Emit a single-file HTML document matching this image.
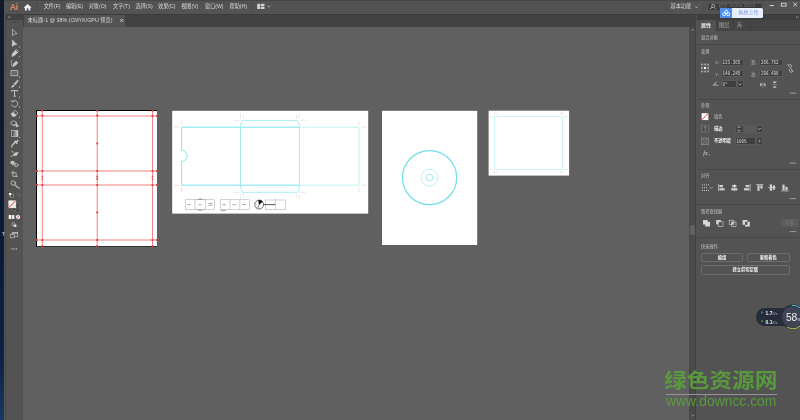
<!DOCTYPE html>
<html lang="zh-CN">
<head>
<meta charset="utf-8">
<title>Adobe Illustrator</title>
<style>
html,body{margin:0;padding:0;}
body{width:800px;height:420px;position:relative;overflow:hidden;background:#606060;
  font-family:"Liberation Sans","Noto Sans CJK SC",sans-serif;color:#d6d6d6;}
.abs{position:absolute;}
.t{position:absolute;white-space:nowrap;line-height:1;font-size:5.15px;color:#d8d8d8;}
.lbl{position:absolute;white-space:nowrap;line-height:1;font-size:4.25px;color:#c2c2c2;}
.sep{position:absolute;left:697px;width:103px;height:1px;background:#474747;}
.inp{position:absolute;background:#3f3f3f;border:0.5px solid #5a5a5a;box-sizing:border-box;border-radius:1px;}
.num{position:absolute;white-space:nowrap;line-height:1;font-size:4.2px;color:#dcdcdc;font-family:"Liberation Mono","Liberation Sans",monospace;transform:scaleY(1.22);transform-origin:0 0;}
.btn{position:absolute;box-sizing:border-box;border:0.6px solid #6c6c6c;border-radius:1.5px;height:9.3px;}
.dots{position:absolute;font-size:6px;line-height:1;color:#c8c8c8;letter-spacing:0.3px;font-weight:bold;}
</style>
</head>
<body>
<div id="root" style="position:absolute;left:0;top:0;width:800px;height:420px;will-change:transform;transform:translateZ(0);">
<!-- desktop strip -->
<div class="abs" style="left:0;top:0;width:4.2px;height:420px;background:linear-gradient(#10182a 0%,#0c1a38 60%,#0d2144 85%,#1a3864 100%);"></div>

<!-- menu bar -->
<div class="abs" id="menubar" style="left:4.2px;top:0;width:795.8px;height:13.5px;background:#535353;border-top:1px solid #464646;box-sizing:border-box;"></div>
<div class="abs" style="left:4.2px;top:13.5px;width:795.8px;height:1px;background:#3c3c3c;"></div>

<!-- tab bar -->
<div class="abs" style="left:23px;top:14.5px;width:673.5px;height:12px;background:#424242;"></div>
<div class="abs" style="left:23.5px;top:14.5px;width:101.5px;height:12px;background:#535353;"></div>

<!-- toolbar -->
<div class="abs" style="left:4.2px;top:14px;width:19.3px;height:406px;background:#3f3f3f;"></div><div class="abs" style="left:4.2px;top:14px;width:0.9px;height:406px;background:#565656;"></div><div class="abs" style="left:5.1px;top:14px;width:1.2px;height:406px;background:#474747;"></div>
<div class="abs" style="left:6px;top:14.5px;width:16.5px;height:5px;background:#414141;"></div>
<div class="abs" id="toolbar" style="left:6px;top:19.5px;width:16.5px;height:401px;background:#535353;"></div>

<!-- canvas -->
<div class="abs" id="canvas" style="left:23.5px;top:26.5px;width:666px;height:394px;background:#606060;"></div>

<!-- canvas scrollbar -->
<div class="abs" style="left:689.2px;top:26.5px;width:7.4px;height:394px;background:#4a4a4a;"></div>
<div class="abs" style="left:690px;top:224.5px;width:5.5px;height:10.5px;border-radius:2.5px;background:#626262;"></div>

<!-- right panel -->
<div class="abs" style="left:695.2px;top:14.5px;width:104.8px;height:406px;background:#535353;border-left:1.8px solid #414141;box-sizing:border-box;"></div>
<div class="abs" style="left:697px;top:14.5px;width:103px;height:5px;background:#3f3f3f;"></div>
<div class="abs" style="left:697px;top:19.5px;width:103px;height:11.5px;background:#454545;"></div>
<div class="abs" style="left:697px;top:19.5px;width:19px;height:11.5px;background:#535353;"></div>

<!--ICONS-->
<svg class="abs" style="left:0;top:0" width="30" height="420" viewBox="0 0 30 420">
<path d="M2.2 232.6H4.2L3.3 235.6" stroke="#c4d0e6" stroke-width="0.8" fill="none"/>
<!-- header chevrons + grip -->
<path d="M8 16.2L9 17.1L8 18M9.6 16.2L10.6 17.1L9.6 18" stroke="#bbb" stroke-width="0.5" fill="none"/>
<path d="M10.5 22.3H18.5" stroke="#3e3e3e" stroke-width="1" stroke-dasharray="0.7 0.5"/>
<g fill="none" stroke="#cdcdcd" stroke-width="0.8" stroke-linejoin="round" stroke-linecap="round">
<!-- selection -->
<path d="M12.4 29.6V35.8L13.9 34.3L16.6 33.8Z" stroke-width="0.7"/>
<!-- direct selection -->
<path d="M12.4 40.2V46.6L14 45L16.6 44.5Z" fill="#cdcdcd" stroke-width="0.6"/>
<!-- pen -->
<path d="M12 56L12.6 53.4L15.6 50.6L17.4 52.4L14.6 55.4Z" fill="#cdcdcd"/>
<path d="M15.2 50.3L16.6 49.6L18.2 51.2L17.6 52.6" stroke-width="0.7"/>
<!-- curvature -->
<path d="M13 66L13.5 63.8L16.2 61.2L17.8 62.8L15.2 65.5Z" fill="#cdcdcd"/>
<path d="M12.4 66.3C10 65.5 12.6 63.6 11.2 62.4C10.4 61.6 11 60.4 12.2 60.6" stroke-width="0.7"/>
<!-- rectangle -->
<rect x="11.3" y="70.5" width="6.5" height="5.2" fill="#6a6a6a" stroke-width="0.7"/>
<!-- brush -->
<path d="M17.7 80L18.5 80.8L15.2 85.2L13.9 84Z" fill="#cdcdcd" stroke-width="0.3"/>
<path d="M11.8 87.2C12 85.4 12.8 84.6 13.8 85C14.8 86.2 13.8 87.2 11.8 87.2Z" fill="#cdcdcd" stroke-width="0.4"/>
<!-- type -->
<path d="M11.6 91.8V90.6H17.6V91.8M14.6 90.6V96.2M13.4 96.2H15.8" stroke-width="0.9" stroke-linecap="butt" stroke-linejoin="miter"/>
<!-- rotate -->
<path d="M12.2 101.6A3.2 3.2 0 1 1 11.6 104.9" stroke-width="0.8"/>
<path d="M11.2 100.3L12.2 102.2L14 101.2" stroke-width="0.6"/>
<!-- eraser -->
<path d="M11.4 114L15.2 110.4L18 113L15 116.2H12.8Z" stroke-width="0.7"/>
<path d="M13.2 112.2L16.2 115L15 116.2H12.8L11.4 114Z" fill="#cdcdcd" stroke-width="0.4"/>
<!-- shape builder -->
<ellipse cx="13.6" cy="123" rx="2.8" ry="2" stroke-width="0.7"/>
<path d="M13 125.2C14.6 126.2 16 125.4 16.4 124.4" stroke-width="0.7"/>
<path d="M16.2 123.6V127.4L17.2 126.4L18.8 126.2Z" fill="#cdcdcd" stroke-width="0.4"/>
<!-- eyedropper -->
<path d="M11.8 146.8L12.2 145.2L15.4 142" stroke-width="1.2"/>
<path d="M15 141.2L17 143.2M16 142.2L17.8 140.6" stroke-width="1.5"/>
<!-- symbol sprayer / blend -->
<path d="M10.8 156.4C12.4 156 13.6 154.8 14.6 153.4C15.2 152.4 16.2 152.2 17 152.6L18.4 152.2L17.6 153.6C17.4 155.4 15.6 156.2 13.8 155.6Z" fill="#cdcdcd" stroke-width="0.4"/>
<path d="M11.6 151.4L13.6 153.4M12.4 151L13.2 152" stroke-width="0.6"/>
<!-- blend -->
<rect x="10.8" y="161.2" width="3.4" height="2.6" fill="#cdcdcd" stroke-width="0.3"/>
<path d="M12.6 163.2H15.6V165H12.6Z" stroke-width="0.6"/>
<ellipse cx="16.2" cy="165.2" rx="1.9" ry="1.6" stroke-width="0.7"/>
<!-- artboard -->
<path d="M13 170.6V176.4H17.8M11 172.8H16.2V176.4" stroke-width="0.75" stroke-linecap="butt"/>
<!-- zoom -->
<circle cx="13.2" cy="183" r="2.2" stroke-width="0.8"/>
<path d="M15 184.8L18.2 187.8" stroke-width="1.1"/>
</g>
<!-- gradient tool -->
<defs><linearGradient id="gr" x1="0" x2="1"><stop offset="0" stop-color="#3a3a3a"/><stop offset="1" stop-color="#d6d6d6"/></linearGradient>
<linearGradient id="wf" x1="0" y1="0" x2="1" y2="1"><stop offset="0" stop-color="#ffffff"/><stop offset="1" stop-color="#dcdcdc"/></linearGradient></defs>
<rect x="11.5" y="130.6" width="6.4" height="6" fill="url(#gr)" stroke="#cdcdcd" stroke-width="0.6"/>
<!-- little corner dots -->
<g fill="#dcdcdc">
<path d="M20 45.9V47.3H18.6ZM20 55.9V57.3H18.6ZM20 76V77.4H18.6ZM20 86V87.4H18.6ZM20 96.2V97.6H18.6ZM20 106.2V107.6H18.6ZM20 116.2V117.6H18.6ZM20 136.4V137.8H18.6ZM20 187.2V188.6H18.6Z"/>
</g>
<!-- default fill/stroke mini -->
<rect x="10.4" y="194.2" width="2.8" height="2.8" fill="#111" stroke="#e6e6e6" stroke-width="0.5"/>
<rect x="8.7" y="192.7" width="2.9" height="2.9" fill="#fff" stroke="#222" stroke-width="0.4"/>
<path d="M17.2 193.6C18.8 193.4 19.8 194.4 19.8 196.4M17.2 193.6L18 192.9M17.2 193.6L18 194.4M19.8 196.4L19.1 195.6M19.8 196.4L20.5 195.6" stroke="#7e7e7e" stroke-width="0.5" fill="none"/>
<!-- stroke (behind) -->
<rect x="12.8" y="203.8" width="7.4" height="7.8" fill="#3c3c3c" stroke="#6e6e6e" stroke-width="0.5"/>
<rect x="14.4" y="205.6" width="4" height="4.2" fill="#535353"/>
<path d="M19.3 204.6V211" stroke="#8fa6c8" stroke-width="0.6" stroke-dasharray="1.4 0.7"/>
<path d="M14.2 210.4L15.4 209.6V211.2Z" fill="#aaa"/>
<!-- fill -->
<rect x="8.1" y="200.1" width="8.2" height="8.2" fill="url(#wf)" stroke="#2e2e2e" stroke-width="0.4"/>
<path d="M8.4 208L16 200.4" stroke="#e0262c" stroke-width="0.9"/>
<!-- color / gradient / none -->
<rect x="8.7" y="215" width="2.6" height="4" fill="#f4f4f4"/>
<rect x="11.8" y="215" width="2.6" height="4" fill="#e4e4e4"/>
<circle cx="18" cy="217" r="2" fill="#fff" stroke="#d8d8d8" stroke-width="0.3"/>
<path d="M16.7 218.4L19.3 215.6" stroke="#e0262c" stroke-width="0.8"/>
<!-- draw mode -->
<circle cx="13.4" cy="224.2" r="1.7" fill="none" stroke="#c8c8c8" stroke-width="0.6"/>
<rect x="13.6" y="224.4" width="2.8" height="2.6" fill="#d2d2d2"/>
<!-- screen mode -->
<rect x="12.2" y="232.4" width="5.6" height="4.2" fill="none" stroke="#cdcdcd" stroke-width="0.6"/>
<path d="M12.2 233.2H17.8" stroke="#cdcdcd" stroke-width="0.9"/>
<rect x="10.2" y="234.4" width="4" height="3.4" fill="#535353" stroke="#cdcdcd" stroke-width="0.6"/>
<!-- more -->
<g fill="#c6c6c6"><rect x="11.4" y="248.3" width="1.2" height="1.2"/><rect x="13.6" y="248.3" width="1.2" height="1.2"/><rect x="15.8" y="248.3" width="1.2" height="1.2"/></g>
</svg>
<!--/ICONS-->
<!--TEXT-->
<!-- Ai logo + home -->
<div class="abs" style="left:9.7px;top:1.5px;font-size:8.8px;line-height:10px;color:#d98a60;font-weight:bold;letter-spacing:-0.3px;">Ai</div>
<svg class="abs" style="left:0;top:0" width="800" height="32" viewBox="0 0 800 32">
<path d="M23.8 7.4L27.6 3.9L31.4 7.4L30.8 8L30.3 7.6V10.4H28.4V8.2H26.8V10.4H24.9V7.6L24.4 8Z" fill="#f0f0f0"/>
<path d="M37.2 3V11.4M252.6 3V11.4M665.6 3V11.4M703.8 3V11.4" stroke="#474747" stroke-width="0.7"/>
<!-- workspace switcher -->
<rect x="257.2" y="3.8" width="3" height="5.2" fill="#d2d2d2"/><rect x="260.9" y="3.8" width="3.6" height="2.3" fill="#d2d2d2"/><rect x="260.9" y="6.7" width="3.6" height="2.3" fill="#d2d2d2"/>
<path d="M267.6 5.8L269 7.2L270.4 5.8" stroke="#d2d2d2" stroke-width="0.7" fill="none"/>
<path d="M695.2 6.4L696.6 7.8L698 6.4" stroke="#d2d2d2" stroke-width="0.7" fill="none"/>
<!-- tab close -->
<path d="M120.4 19.2L123 21.8M123 19.2L120.4 21.8" stroke="#eee" stroke-width="0.8"/>
<!-- search box -->
<rect x="708" y="3.4" width="54" height="7.2" rx="0.8" fill="#3b3b3b" stroke="#5e5e5e" stroke-width="0.5"/>
<circle cx="713.2" cy="6" r="1.6" fill="none" stroke="#e4e4e4" stroke-width="0.6"/>
<path d="M712 7.2L710.2 9" stroke="#e4e4e4" stroke-width="0.8"/>
<path d="M714.6 8.4H716.2L715.4 9.2Z" fill="#e4e4e4"/>
<!-- window controls -->
<path d="M766.6 0.5V8.4H800M778 0.5V8.4M789.5 0.5V8.4" stroke="#5e5e5e" stroke-width="0.5" fill="none"/>
<path d="M769.6 5.6H774" stroke="#e6e6e6" stroke-width="0.9"/>
<rect x="781.3" y="3.2" width="4.8" height="2.9" fill="none" stroke="#e6e6e6" stroke-width="0.8"/>
<path d="M793.2 2.6L797.2 6.4M797.2 2.6L793.2 6.4" stroke="#e6e6e6" stroke-width="0.8"/>
<!-- panel collapse chevrons -->
<path d="M796 16.2L797 17.1L796 18M797.6 16.2L798.6 17.1L797.6 18" stroke="#bbb" stroke-width="0.5" fill="none"/>
<!-- panel tab separators -->
<path d="M716.4 19.5V31M733.4 19.5V31M750.2 19.5V31" stroke="#3a3a3a" stroke-width="0.6"/>
<!-- scrollbar arrows -->
<path d="M691.4 30.6L692.8 29.2L694.2 30.6" stroke="#bdbdbd" stroke-width="0.6" fill="none"/>
</svg>
<svg class="abs" style="left:688px;top:408px" width="10" height="12" viewBox="688 408 10 12"><path d="M691.4 414.8L692.8 416.2L694.2 414.8" stroke="#bdbdbd" stroke-width="0.6" fill="none"/></svg>
<div class="t" style="left:43.7px;top:4.1px;">文件(F)</div>
<div class="t" style="left:65.9px;top:4.1px;">编辑(E)</div>
<div class="t" style="left:88.7px;top:4.1px;">对象(O)</div>
<div class="t" style="left:113.1px;top:4.1px;">文字(T)</div>
<div class="t" style="left:135.6px;top:4.1px;">选择(S)</div>
<div class="t" style="left:158.1px;top:4.1px;">效果(C)</div>
<div class="t" style="left:181.2px;top:4.1px;">视图(V)</div>
<div class="t" style="left:205px;top:4.1px;">窗口(W)</div>
<div class="t" style="left:229.5px;top:4.1px;">帮助(H)</div>
<div class="t" style="left:27.5px;top:18.1px;font-size:5.32px;">未标题-1 @ 38% (CMYK/GPU 预览)</div>
<div class="t" style="left:670.6px;top:4px;">基本功能</div>
<div class="t" style="left:718.5px;top:4.4px;color:#6c6c6c;font-size:4.6px;">搜索 Adobe Stock</div>
<!-- panel tabs -->
<div class="t" style="left:701px;top:22.9px;color:#f2f2f2;font-weight:bold;font-size:5px;">属性</div>
<div class="t" style="left:719px;top:22.8px;color:#a9a9a9;">图层</div>
<div class="t" style="left:737.2px;top:22.8px;color:#a9a9a9;">库</div>
<!--/TEXT-->
<!--ART-->
<svg class="abs" style="left:0;top:0" width="800" height="420" viewBox="0 0 800 420">
<!-- artboard 1 -->
<rect x="36" y="110" width="121" height="137" fill="#000"/>
<rect x="37" y="111" width="120" height="135.2" fill="#fff"/>
<g stroke="#ee5c5c" stroke-width="0.75" fill="none">
<line x1="42.3" y1="110" x2="42.3" y2="247"/>
<line x1="97.2" y1="110" x2="97.2" y2="247"/>
<line x1="152.5" y1="110" x2="152.5" y2="247"/>
<line x1="36" y1="116" x2="157" y2="116"/>
<line x1="36" y1="171" x2="157" y2="171"/>
<line x1="36" y1="185" x2="157" y2="185"/>
<line x1="36" y1="240" x2="157" y2="240"/>
</g>
<g fill="#e8363a">
<circle cx="42.3" cy="115.5" r="1.1"/><circle cx="37" cy="116" r="0.9"/><circle cx="42.3" cy="110.5" r="0.9"/>
<circle cx="97.2" cy="110.8" r="1"/><circle cx="97.2" cy="115.6" r="1.1"/>
<circle cx="152.5" cy="110.8" r="1"/><circle cx="152.5" cy="115.8" r="1.1"/><circle cx="156.8" cy="116" r="0.9"/>
<circle cx="97.2" cy="143.5" r="1"/><circle cx="97.2" cy="212.5" r="1"/>
<circle cx="42.3" cy="171" r="1.1"/><circle cx="37" cy="171" r="0.9"/><circle cx="42.3" cy="185" r="1.1"/><circle cx="37" cy="185" r="0.9"/>
<circle cx="42.3" cy="176.5" r="0.8"/><circle cx="42.3" cy="179" r="0.8"/>
<circle cx="97.2" cy="171" r="1.1"/><circle cx="97.2" cy="185" r="1.1"/><circle cx="97.2" cy="176.5" r="0.9"/><circle cx="97.2" cy="179" r="0.9"/>
<circle cx="152.5" cy="171" r="1.1"/><circle cx="156.8" cy="171" r="0.9"/><circle cx="152.5" cy="185" r="1.1"/><circle cx="156.8" cy="185" r="0.9"/>
<circle cx="152.5" cy="176.5" r="0.8"/><circle cx="152.5" cy="179" r="0.8"/>
<circle cx="42.3" cy="240" r="1.1"/><circle cx="37" cy="240" r="0.9"/><circle cx="42.3" cy="246" r="0.9"/>
<circle cx="97.2" cy="240" r="1.1"/><circle cx="97.2" cy="246" r="1"/>
<circle cx="152.5" cy="240" r="1.1"/><circle cx="156.8" cy="240" r="0.9"/><circle cx="152.5" cy="246" r="0.9"/>
</g>

<!-- artboard 2 -->
<rect x="172.2" y="110.8" width="196" height="102.8" fill="#fff"/>
<g stroke="#cfcfcf" stroke-width="0.5" fill="none">
<path d="M181.6 120.5V125.5M174.3 127.2H179.5M181.6 187V192M174.3 185.2H179.5"/>
<path d="M359 120.5V125.5M361 127.2H366M359 187V192M361 185.2H366"/>
<path d="M240.5 113.5V118.3M243.3 115V118.3M234.5 120.3H239.5M299.4 113.5V118.3M296.6 115V118.3M300.8 120.3H305.5"/>
<path d="M240.5 194.5V199M243.3 194.5V197.5M234.5 192.4H239.5M299.4 194.5V199M296.6 194.5V197.5M300.8 192.4H305.5"/>
</g>
<g fill="none">
<path d="M181.6 127.2H299.4M181.6 185.2H299.4" stroke="#6adfe9" stroke-width="0.9"/>
<path d="M181.6 127.2V150.2A5.6 5.6 0 0 1 181.6 161.4V185.2" stroke="#74e0ea" stroke-width="0.8"/>
<path d="M240.5 127.2V185.2M299.4 127.2V185.2" stroke="#8ee6ee" stroke-width="0.8"/>
<path d="M240.5 127.2C240.7 124 241.2 121.6 242.3 120.4H297.6C298.7 121.6 299.2 124 299.4 127.2M240.5 185.2C240.7 188.4 241.2 191 242.3 192.3H297.6C298.7 191 299.2 188.4 299.4 185.2" stroke="#8be5ee" stroke-width="0.7"/>
<path d="M299.4 127.2H359V185.2H299.4" stroke="#aeedf2" stroke-width="0.7"/>
</g>
<!-- small diagrams -->
<g stroke="#9a9a9a" stroke-width="0.45" fill="none">
<rect x="185.3" y="199.8" width="29.4" height="9.6"/>
<path d="M195.3 199.8Q193.8 204.6 195.3 209.4M205.3 199.8Q206.8 204.6 205.3 209.4M195.3 199.8Q200 198 205.3 199.8M195.3 209.4Q200 211.2 205.3 209.4"/>
<rect x="220.2" y="199.8" width="29.3" height="9.6"/>
<path d="M230 199.8V209.4M239.8 199.8V209.4"/>
<rect x="265.4" y="200" width="20" height="9.3"/>
<path d="M275.3 198.5V209.3"/>
</g>
<g stroke="#555" stroke-width="0.5">
<path d="M187.5 204.6H190.5M198.5 204.6H201.5M208.5 203.4H212.5M208.5 205.3H212.5M198.5 199.3H202M198.5 210H202M222.5 204.6H226M232.5 204.6H236M242.5 204.6H246M220.5 210.6H226"/>
</g>
<circle cx="259.2" cy="204.6" r="4.4" fill="#fff" stroke="#111" stroke-width="0.6"/>
<path d="M259.2 204.6L262.5 201.6A4.4 4.4 0 0 0 258.5 200.3ZM259.2 204.6L257.8 208.2" fill="#111" stroke="#111" stroke-width="0.5"/>
<path d="M263.6 204.6H275.3" stroke="#111" stroke-width="0.7"/>

<!-- artboard 3 -->
<rect x="382" y="110.8" width="95.2" height="134.2" fill="#fff"/>
<circle cx="429.6" cy="177.6" r="27.1" fill="none" stroke="#6fdfe9" stroke-width="1.25"/>
<circle cx="429.6" cy="177.6" r="8.5" fill="none" stroke="#a2e9f0" stroke-width="0.7"/>
<circle cx="429.6" cy="177.6" r="3.3" fill="none" stroke="#88e4ec" stroke-width="0.8"/>

<!-- artboard 4 -->
<rect x="488.6" y="110.7" width="80.5" height="64.9" fill="#fff"/>
<g stroke="#cfcfcf" stroke-width="0.5" fill="none">
<path d="M494.4 112.5V115M496.2 112.5V115M560.8 112.5V115M562.6 112.5V115M494.4 171V173.5M496.2 171V173.5M560.8 171V173.5M562.6 171V173.5"/>
<path d="M490 116.4H493M564 116.4H567.5M490 169.4H493M564 169.4H567.5"/>
</g>
<rect x="494.4" y="116.4" width="68.2" height="53" fill="none" stroke="#aeecf1" stroke-width="0.6"/>
</svg>
<!--/ART-->
<!--PANEL-->
<div class="lbl" style="left:701px;top:36.4px;">混合对象</div>
<div class="sep" style="top:44.4px;"></div>
<div class="lbl" style="left:701px;top:50.4px;">变换</div>
<div class="sep" style="top:99px;"></div>
<div class="lbl" style="left:701px;top:104.2px;">外观</div>
<div class="sep" style="top:168.6px;"></div>
<div class="lbl" style="left:701px;top:174.4px;">对齐</div>
<div class="sep" style="top:204.2px;"></div>
<div class="lbl" style="left:701px;top:209.6px;">路径查找器</div>
<div class="sep" style="top:236.8px;"></div>
<div class="lbl" style="left:701px;top:245.2px;">快速操作</div>

<!-- transform inputs -->
<div class="inp" style="left:721px;top:58.5px;width:22.6px;height:7.2px;"></div>
<div class="inp" style="left:721px;top:70px;width:22.6px;height:7.2px;"></div>
<div class="inp" style="left:759.4px;top:58.5px;width:23.6px;height:7.2px;"></div>
<div class="inp" style="left:759.4px;top:70px;width:23.6px;height:7.2px;"></div>
<div class="inp" style="left:721px;top:80.4px;width:15.8px;height:7.6px;"></div>
<div class="inp" style="left:736.6px;top:80.4px;width:7px;height:7.6px;"></div>
<div class="lbl" style="left:715px;top:61.4px;font-size:4.4px;color:#b8b8b8;">X:</div>
<div class="lbl" style="left:715px;top:72.9px;font-size:4.4px;color:#b8b8b8;">Y:</div>
<div class="lbl" style="left:751px;top:61.2px;font-size:4.4px;color:#b8b8b8;">宽:</div>
<div class="lbl" style="left:751px;top:72.8px;font-size:4.4px;color:#b8b8b8;">高:</div>
<div class="num" style="left:722.6px;top:59.8px;">133.365</div>
<div class="num" style="left:722.6px;top:71.3px;">148.245</div>
<div class="num" style="left:761px;top:59.8px;">266.762</div>
<div class="num" style="left:761px;top:71.3px;">298.496</div>
<div class="num" style="left:722.6px;top:81.8px;">0°</div>

<!-- appearance -->
<div class="lbl" style="left:714px;top:115px;">填色</div>
<div class="lbl" style="left:714px;top:126.8px;color:#f4f4f4;font-weight:bold;">描边</div>
<div class="lbl" style="left:714px;top:139.4px;color:#f4f4f4;font-weight:bold;">不透明度</div>
<div class="inp" style="left:735.2px;top:125px;width:8.2px;height:7.6px;border-right:none;"></div>
<div class="inp" style="left:743.2px;top:125px;width:12.6px;height:7.6px;background:#595959;border-left:none;border-right:none;border-radius:0;"></div>
<div class="inp" style="left:755.6px;top:125px;width:7.3px;height:7.6px;"></div>
<div class="inp" style="left:735.2px;top:137.2px;width:20.6px;height:7.6px;"></div>
<div class="inp" style="left:755.9px;top:137.2px;width:7px;height:7.6px;"></div>
<div class="num" style="left:736.4px;top:139px;">100%</div>

<!-- pathfinder expand button (disabled) -->
<div class="abs" style="left:781px;top:219px;width:17.4px;height:8.4px;background:#5d5d5d;border-radius:1px;"></div>
<div class="lbl" style="left:785.6px;top:221px;color:#7a7a7a;">扩展</div>

<!-- quick actions -->
<div class="btn" style="left:701px;top:252.5px;width:42.2px;"></div>
<div class="btn" style="left:747.2px;top:252.5px;width:42.4px;"></div>
<div class="btn" style="left:701px;top:265.4px;width:88.6px;"></div>
<div class="lbl" style="left:717.8px;top:255.5px;color:#f4f4f4;font-weight:bold;">编组</div>
<div class="lbl" style="left:759.8px;top:255.5px;color:#f4f4f4;font-weight:bold;">重新着色</div>
<div class="lbl" style="left:732.6px;top:268.3px;color:#f4f4f4;font-weight:bold;">建立剪切蒙版</div>

<svg class="abs" style="left:696px;top:30px" width="104" height="260" viewBox="696 30 104 260">
<!-- reference point icon -->
<g fill="#a6a6a6">
<rect x="701" y="63.6" width="1.8" height="1.8"/><rect x="704.1" y="63.6" width="1.8" height="1.8"/><rect x="707.2" y="63.6" width="1.8" height="1.8"/>
<rect x="701" y="67.1" width="1.8" height="1.8"/><rect x="707.2" y="67.1" width="1.8" height="1.8"/>
<rect x="701" y="70.6" width="1.8" height="1.8"/><rect x="704.1" y="70.6" width="1.8" height="1.8"/><rect x="707.2" y="70.6" width="1.8" height="1.8"/>
</g>
<rect x="701.9" y="64.5" width="6.2" height="7" fill="none" stroke="#9a9a9a" stroke-width="0.4"/>
<rect x="703.9" y="66.9" width="2.2" height="2.2" fill="#fff"/>
<!-- link icon -->
<g stroke="#cfcfcf" stroke-width="0.7" fill="none">
<path d="M788.4 64.8C789.8 63.8 791.6 64.4 791.4 66L791 67.4M791.6 70.4C793 71.4 792.4 72.6 790.8 72.2C789.4 71.8 789.2 70.2 789.6 69.2M787.6 64.4L793.2 71.6"/>
</g>
<!-- angle icon -->
<path d="M713 85.2H718.6M713 85.2L717 81.2M715.8 85.2A2.8 2.8 0 0 0 715 83.2" stroke="#cfcfcf" stroke-width="0.6" fill="none"/>
<path d="M738.8 83.6L740.2 85L741.6 83.6" stroke="#e0e0e0" stroke-width="0.7" fill="none"/>
<!-- flip icons -->
<path d="M760.2 82.6L762.2 84.7L760.2 86.8ZM765.4 82.6L763.4 84.7L765.4 86.8Z" fill="#c4c4c4"/>
<path d="M762.8 82V87.4" stroke="#c4c4c4" stroke-width="0.4"/>
<path d="M772.6 81.6L774.7 83.7L776.8 81.6ZM772.6 87.8L774.7 85.7L776.8 87.8Z" fill="#c4c4c4"/>
<path d="M772 84.7H777.4" stroke="#c4c4c4" stroke-width="0.4"/>
<!-- more dots -->
<g fill="#cfcfcf">
<rect x="790.2" y="92.6" width="1.1" height="1.1"/><rect x="792.4" y="92.6" width="1.1" height="1.1"/><rect x="794.6" y="92.6" width="1.1" height="1.1"/>
<rect x="790.2" y="162.6" width="1.1" height="1.1"/><rect x="792.4" y="162.6" width="1.1" height="1.1"/><rect x="794.6" y="162.6" width="1.1" height="1.1"/>
<rect x="790.2" y="198" width="1.1" height="1.1"/><rect x="792.4" y="198" width="1.1" height="1.1"/><rect x="794.6" y="198" width="1.1" height="1.1"/>
<rect x="790.2" y="231" width="1.1" height="1.1"/><rect x="792.4" y="231" width="1.1" height="1.1"/><rect x="794.6" y="231" width="1.1" height="1.1"/>
</g>
<!-- fill swatch -->
<rect x="701.4" y="113" width="7.2" height="7.2" fill="#fff" stroke="#3a3a3a" stroke-width="0.3"/>
<path d="M701.6 120L708.4 113.2" stroke="#e0262c" stroke-width="0.9"/>
<!-- stroke swatch -->
<rect x="701.6" y="125.2" width="6.8" height="6.8" fill="#4c4c4c" stroke="#8c8c8c" stroke-width="0.5"/>
<path d="M704 127.6C704.2 126.4 706 126.4 706 127.6C706 128.6 705 128.6 705 129.6M705 130.4V131" stroke="#c4c4c4" stroke-width="0.6" fill="none"/>
<!-- opacity swatch -->
<rect x="701.6" y="138" width="6.8" height="6.8" fill="#585858" stroke="#a8a8a8" stroke-width="0.5"/>
<g fill="#7a7a7a"><rect x="702.6" y="139" width="1.6" height="1.6"/><rect x="705.8" y="139" width="1.6" height="1.6"/><rect x="704.2" y="140.6" width="1.6" height="1.6"/><rect x="702.6" y="142.2" width="1.6" height="1.6"/><rect x="705.8" y="142.2" width="1.6" height="1.6"/></g>
<!-- spinner arrows, dropdowns -->
<path d="M737.4 128L739 126.4L740.6 128M737.4 129.8L739 131.4L740.6 129.8" stroke="#e0e0e0" stroke-width="0.7" fill="none"/>
<path d="M758 128.2L759.4 129.6L760.8 128.2" stroke="#e0e0e0" stroke-width="0.7" fill="none"/>
<path d="M758.8 139.6L760.2 141L758.8 142.4" stroke="#e0e0e0" stroke-width="0.7" fill="none"/>
<!-- fx -->
<text x="703.2" y="154.6" font-family="Liberation Serif, serif" font-style="italic" font-size="6.4" fill="#d6d6d6">fx</text>
<rect x="708.8" y="154.6" width="0.8" height="0.8" fill="#d6d6d6"/>
<!-- align icons -->
<g fill="#cfcfcf">
<g><rect x="702" y="184.4" width="1" height="1"/><rect x="704" y="184.4" width="1" height="1"/><rect x="706" y="184.4" width="1" height="1"/><rect x="708" y="184.4" width="1" height="1"/>
<rect x="702" y="187.2" width="1" height="1"/><rect x="704" y="187.2" width="1" height="1"/><rect x="706" y="187.2" width="1" height="1"/>
<rect x="702" y="190" width="1" height="1"/><rect x="704" y="190" width="1" height="1"/><rect x="706" y="190" width="1" height="1"/><rect x="708" y="190" width="1" height="1"/></g>
<path d="M709.6 187L711.2 188.4L712.8 187" stroke="#cfcfcf" stroke-width="0.6" fill="none"/>
<rect x="718" y="184" width="0.7" height="7.2"/><rect x="719.4" y="185" width="3.6" height="2.2"/><rect x="719.4" y="188.2" width="5.2" height="2.2"/>
<rect x="734" y="184" width="0.7" height="7.2"/><rect x="732.2" y="185" width="4.2" height="2.2"/><rect x="731.2" y="188.2" width="6.2" height="2.2"/>
<rect x="749.8" y="184" width="0.7" height="7.2"/><rect x="745.6" y="185" width="3.6" height="2.2"/><rect x="744" y="188.2" width="5.2" height="2.2"/>
<rect x="756" y="184" width="7.2" height="0.7"/><rect x="757.4" y="185.2" width="2.2" height="5.6"/><rect x="760.4" y="185.2" width="2.2" height="3.4"/>
<rect x="768.4" y="187.3" width="7.4" height="0.7"/><rect x="769.8" y="184.4" width="2.2" height="6.4"/><rect x="772.8" y="185.4" width="2.2" height="4.4"/>
<rect x="781" y="190.6" width="7.6" height="0.7"/><rect x="782.4" y="184.6" width="2.2" height="5.6"/><rect x="785.4" y="186.8" width="2.2" height="3.4"/>
</g>
<!-- pathfinder icons -->
<g>
<path d="M703 220H707.6V221.8H710V226.4H705.2V224.6H703Z" fill="#d8d8d8"/>
<rect x="716.2" y="220" width="4.6" height="4.4" fill="#d8d8d8"/><rect x="718.2" y="221.8" width="4.8" height="4.6" fill="#535353" stroke="#d8d8d8" stroke-width="0.6"/>
<rect x="729.2" y="220.2" width="4.6" height="4.4" fill="none" stroke="#d8d8d8" stroke-width="0.6"/><rect x="731.4" y="222" width="4.6" height="4.4" fill="none" stroke="#d8d8d8" stroke-width="0.6"/><rect x="731.8" y="222.4" width="1.8" height="1.8" fill="#d8d8d8"/>
<path d="M742.6 220H747.4V221.8H749.8V226.6H745V224.8H742.6Z" fill="#d8d8d8"/><rect x="745" y="221.8" width="2.4" height="3" fill="#535353"/>
</g>
</svg>
<!--/PANEL-->
<!--OVERLAY-->
<!-- upload widget -->
<div class="abs" style="left:719.8px;top:7.6px;width:43.2px;height:10px;border-radius:1.6px;background:#e9f0fd;overflow:hidden;box-shadow:0 0 1px rgba(0,0,0,.35);">
  <div class="abs" style="left:0;top:0;width:12.4px;height:10px;background:#4b8ff0;"></div>
  <svg class="abs" style="left:0;top:0" width="13" height="10" viewBox="0 0 13 10"><g fill="none" stroke="#fff" stroke-width="0.9"><circle cx="6.2" cy="3.6" r="1.5"/><circle cx="4.2" cy="6.2" r="1.5"/><circle cx="8.2" cy="6.2" r="1.5"/></g></svg>
  <div class="abs" style="left:18.4px;top:2.4px;font-size:5.1px;line-height:1;color:#7b97dc;white-space:nowrap;">拖拽上传</div>
</div>
<!-- network speed widget -->
<div class="abs" style="left:755.6px;top:308.4px;width:40px;height:17.4px;border-radius:8.7px;background:#262c3a;"></div>
<svg class="abs" style="left:750px;top:300px" width="50" height="34" viewBox="750 300 50 34">
<circle cx="793" cy="317" r="12.4" fill="#2b3140"/>
<circle cx="793" cy="317" r="10.8" fill="#3d4454"/>
<path d="M792 305.4A11.6 11.6 0 0 1 800 307.8" stroke="#39c6c9" stroke-width="1" fill="none"/>
<path d="M787.2 327.1A11.6 11.6 0 0 0 800 326.2" stroke="#b9c24a" stroke-width="1" fill="none"/>
<path d="M760.8 311.8H763.2L762 313.8Z" fill="#3aa0ee"/>
<path d="M760.8 321.8H763.2L762 319.8Z" fill="#3cb64a"/>
<text x="765.6" y="315" font-family="Liberation Sans, sans-serif" font-size="4.9" font-weight="bold" fill="#f2f2f2">1.7<tspan font-size="3.6" font-weight="normal" fill="#aab0bc">K/s</tspan></text>
<text x="765.6" y="323.6" font-family="Liberation Sans, sans-serif" font-size="4.9" font-weight="bold" fill="#f2f2f2">0.1<tspan font-size="3.6" font-weight="normal" fill="#aab0bc">K/s</tspan></text>
<text x="785.9" y="320.8" font-family="Liberation Sans, sans-serif" font-size="10.2" fill="#f0f0f0">58<tspan font-size="4" dy="-0.2">%</tspan></text>
</svg>
<!-- watermark -->
<div class="abs" style="left:664.3px;top:368.3px;font-size:19.9px;line-height:26px;font-weight:bold;color:#5aa33a;opacity:.88;white-space:nowrap;transform:scaleX(1.14);transform-origin:0 0;font-family:'Liberation Sans','Noto Sans CJK SC',sans-serif;">绿色资源网</div>
<div class="abs" style="left:666px;top:393.6px;width:110.6px;height:0.9px;background:#9a9a9a;opacity:.9;"></div>
<div class="abs" style="left:666px;top:393.2px;font-size:13.9px;line-height:16px;color:#5aa33a;opacity:.88;white-space:nowrap;font-family:'Liberation Sans',sans-serif;" id="wmurl">www.downcc.com</div>
<!--/OVERLAY-->
</div>
</body>
</html>
